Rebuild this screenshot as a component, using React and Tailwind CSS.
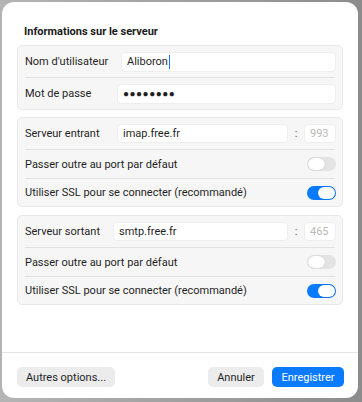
import React from "react";

function Toggle({ on }) {
  return (
    <div
      className={
        "w-[29px] h-[14px] rounded-full flex items-center px-[1px] " +
        (on ? "bg-[#0a7aff] justify-end" : "bg-[#e3e3e3] justify-start")
      }
    >
      <div className="w-[17px] h-[12px] rounded-full bg-white shadow-[0_0_1px_rgba(0,0,0,0.3)]" />
    </div>
  );
}

function Sep() {
  return <div className="mx-[7px] h-px bg-[#e2e2e2]" />;
}

function ServerGroup({ label, host, port, inputLeft }) {
  return (
    <div className="rounded-[5px] border border-[#e8e8e8] bg-[#f6f6f6]">
      <div className="h-[31px] flex items-center pl-[7px] pr-[6px]">
        <span className="text-[#1f1f1f]" style={{ width: inputLeft }}>{label}</span>
        <div className="flex-1 h-[19px] rounded-[4px] bg-white border border-[#eeeeee] flex items-center pl-[5px] text-[#1f1f1f]">
          {host}
        </div>
        <span className="w-[16px] text-center text-[#555]">:</span>
        <div className="w-[32px] h-[19px] rounded-[4px] bg-white border border-[#eeeeee] flex items-center pl-[5px] text-[#b8b8b8]">
          {port}
        </div>
      </div>
      <Sep />
      <div className="h-[28px] flex items-center justify-between pl-[7px] pr-[6px]">
        <span className="text-[#1f1f1f]">Passer outre au port par défaut</span>
        <Toggle on={false} />
      </div>
      <Sep />
      <div className="h-[27px] flex items-center justify-between pl-[7px] pr-[6px]">
        <span className="text-[#1f1f1f]">Utiliser SSL pour se connecter (recommandé)</span>
        <Toggle on={true} />
      </div>
    </div>
  );
}

export default function App() {
  return (
    <div
      className="w-[362px] h-[402px] bg-gradient-to-r from-[#b4b4b4] to-[#8c8c8c] pl-[2px] pt-[2px] text-[11px] leading-[15px]"
      style={{ fontFamily: 'Roboto, "Liberation Sans", Arial, sans-serif' }}
    >
      <div className="w-[356px] h-[396px] bg-white rounded-[12px] flex flex-col">
        <div className="px-[15px] pt-[21px]">
          <div className="h-[16px] pl-[7px] font-bold text-[#1a1a1a] flex items-center">
            Informations sur le serveur
          </div>
          <div className="mt-[6px] rounded-[5px] border border-[#e8e8e8] bg-[#f6f6f6]">
            <div className="h-[31px] flex items-center pl-[7px] pr-[6px]">
              <span className="w-[96px] text-[#1f1f1f]">Nom d'utilisateur</span>
              <div className="flex-1 h-[20px] rounded-[4px] bg-white border border-[#eeeeee] flex items-center pl-[5px] text-[#1f1f1f]">
                Aliboron<span className="inline-block w-px h-[14px] bg-[#0a7aff] ml-[1px]" />
              </div>
            </div>
            <Sep />
            <div className="h-[31px] flex items-center pl-[7px] pr-[6px]">
              <span className="w-[92px] text-[#1f1f1f]">Mot de passe</span>
              <div className="flex-1 h-[20px] rounded-[4px] bg-white border border-[#eeeeee] flex items-center pl-[5px] text-[#1f1f1f] text-[10px] tracking-[0.5px]">
                ●●●●●●●●
              </div>
            </div>
          </div>
          <div className="mt-[7px]">
            <ServerGroup label="Serveur entrant" host="imap.free.fr" port="993" inputLeft="92px" />
          </div>
          <div className="mt-[8px]">
            <ServerGroup label="Serveur sortant" host="smtp.free.fr" port="465" inputLeft="88px" />
          </div>
        </div>
        <div className="flex-1" />
        <div className="h-px bg-[#e6e6e6]" />
        <div className="flex items-center pl-[15px] pr-[14px] pt-[14px] pb-[11px]">
          <button className="h-[20px] w-[98px] rounded-[5px] bg-[#ececec] text-[#1f1f1f]">
            Autres options...
          </button>
          <div className="flex-1" />
          <button className="h-[20px] w-[56px] rounded-[5px] bg-[#ececec] text-[#1f1f1f]">
            Annuler
          </button>
          <button className="ml-[8px] h-[20px] w-[72px] rounded-[5px] bg-[#0a7aff] text-white">
            Enregistrer
          </button>
        </div>
      </div>
    </div>
  );
}
